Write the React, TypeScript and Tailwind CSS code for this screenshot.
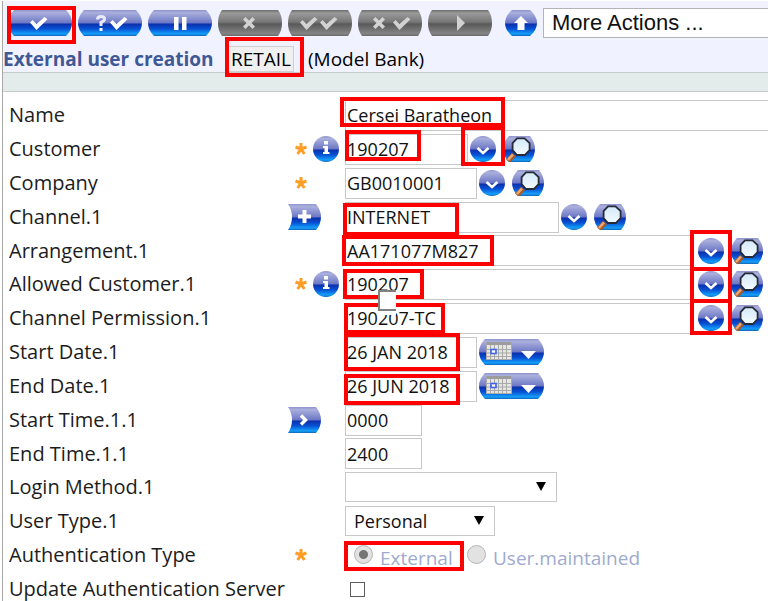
import React from "react";

type Area = { children: React.ReactNode };

/* Shared gradients for the glossy controls */
function Gradients() {
  return (
    <svg width="0" height="0" className="absolute" aria-hidden="true">
      <defs>
        <linearGradient id="blue" x1="0" y1="0" x2="0" y2="1">
          <stop offset="0" stopColor="#8f94cc" />
          <stop offset="0.1" stopColor="#aaafdd" />
          <stop offset="0.48" stopColor="#6f7ac6" />
          <stop offset="0.55" stopColor="#0c32ae" />
          <stop offset="0.72" stopColor="#0750d2" />
          <stop offset="0.92" stopColor="#14a0fb" />
          <stop offset="1" stopColor="#1263b8" />
        </linearGradient>
        <linearGradient id="grey" x1="0" y1="0" x2="0" y2="1">
          <stop offset="0" stopColor="#6d6d6d" />
          <stop offset="0.12" stopColor="#9a9a9a" />
          <stop offset="0.46" stopColor="#777777" />
          <stop offset="0.54" stopColor="#595959" />
          <stop offset="0.9" stopColor="#848484" />
          <stop offset="1" stopColor="#6a6a6a" />
        </linearGradient>
        <linearGradient id="glass" x1="0" y1="0" x2="0" y2="1">
          <stop offset="0" stopColor="#d4e9fa" />
          <stop offset="1" stopColor="#f4fbff" />
        </linearGradient>
      </defs>
    </svg>
  );
}

const check = "M0 5.5L2.5 3L6.5 7L14.5 0L17.5 2.2L6.5 13Z";
const cross = "M0 2.5L2.5 0L6 3.5L9.5 0L12 2.5L8.5 6L12 9.5L9.5 12L6 8.5L2.5 12L0 9.5L3.5 6Z";

function ToolButton({ label, grey, children }: Area & { label: string; grey?: boolean }) {
  return (
    <button type="button" aria-label={label} disabled={grey} className="block h-[26px] w-16 shrink-0">
      <svg viewBox="0 0 64 26" className="block h-[26px] w-16">
        {grey ? (
          <path d="M4 0H60Q64 5 64 13T60 26H4Q0 21 0 13T4 0Z" fill="url(#grey)" />
        ) : (
          <path d="M6 0H58Q64 6 64 13T58 26H6Q0 20 0 13T6 0Z" fill="url(#blue)" />
        )}
        <g fill={grey ? "#d2d2d2" : "#ffffff"}>{children}</g>
      </svg>
    </button>
  );
}

function DropButton({ framed }: { framed?: string }) {
  return (
    <span className="relative block h-[26px] w-[26px] shrink-0">
      <button type="button" aria-label="Show list" className="block">
        <svg viewBox="0 0 26 26" className="block h-[26px] w-[26px]">
          <circle cx="13" cy="13" r="13" fill="url(#blue)" />
          <path d="M7.5 12l5.5 5 5.5-5" fill="none" stroke="#fff" strokeWidth="2.6" />
        </svg>
      </button>
      {framed && <Frame place={framed} />}
    </span>
  );
}

function SearchButton() {
  return (
    <button type="button" aria-label="Search" className="ml-[7px] block shrink-0">
      <svg viewBox="0 0 32 26" className="block h-[26px] w-8">
        <path d="M6 0H27Q32 6 32 13T27 26H6Q0 20 0 13T6 0Z" fill="url(#blue)" />
        <path d="M5 25L11 18.5" stroke="#a5592b" strokeWidth="5.4" />
        <path d="M5 24L10 18.5" stroke="#eda873" strokeWidth="2.6" />
        <path
          d="M14 2.4H21.5L26.6 7.2V14L21.8 19H14L9.6 14.2V7.2Z"
          fill="url(#glass)"
          stroke="#262b38"
          strokeWidth="1.8"
        />
      </svg>
    </button>
  );
}

function CalendarButton() {
  return (
    <button type="button" aria-label="Open calendar" className="block shrink-0">
      <svg viewBox="0 0 65 26" className="block h-[26px] w-[65px]">
        <path d="M6 0H59Q65 6 65 13T59 26H6Q0 20 0 13T6 0Z" fill="url(#blue)" />
        <rect x="7" y="3" width="26" height="18" fill="#e6e6e2" />
        <rect x="7" y="3" width="26" height="3" fill="#9c9c9c" />
        <path
          d="M7 10.5H33M7 14H33M7 17.5H33M7 20.5H33M7.5 3V21M11.5 6V21M15.5 6V21M19.5 6V21M23.5 6V21M27.5 6V21M32.5 3V21"
          stroke="#a9a9a9"
          strokeWidth="1"
        />
        <rect x="12" y="10.5" width="5" height="4" fill="#fff" stroke="#3f63e6" strokeWidth="1.6" />
        <path d="M42 12H57L49.5 20Z" fill="#fff" />
      </svg>
    </button>
  );
}

function InfoButton() {
  return (
    <button type="button" aria-label="Information" className="block shrink-0">
      <svg viewBox="0 0 26 26" className="block h-[26px] w-[26px]">
        <circle cx="13" cy="13" r="13" fill="url(#blue)" />
        <rect x="11" y="5" width="4" height="3.5" fill="#fff" />
        <path d="M10 10H15V16H16.5V18H10V16H11.5V12H10Z" fill="#fff" />
      </svg>
    </button>
  );
}

function FlagButton({ label, children }: Area & { label: string }) {
  return (
    <button type="button" aria-label={label} className="block shrink-0">
      <svg viewBox="0 0 33 26" className="block h-[26px] w-[33px]">
        <path d="M0 0H28Q33 6 33 13T28 26H0Q4 20 4 13T0 0Z" fill="url(#blue)" />
        {children}
      </svg>
    </button>
  );
}

function Asterisk() {
  return (
    <span className="flex w-[25px] shrink-0 justify-center">
      <svg viewBox="0 0 14 14" className="h-[14px] w-[14px]" role="img" aria-label="Required">
        <path d="M7 7V1M7 7L1.5 5M7 7L12.5 5M7 7L3.6 12M7 7L10.4 12" stroke="#ff9d24" strokeWidth="3" />
      </svg>
    </span>
  );
}

/* Red highlight drawn over a control */
function Frame({ place }: { place: string }) {
  return <span aria-hidden="true" className={`pointer-events-none absolute z-10 border-4 border-[#ff0000] ${place}`} />;
}

function Row({ id, label, marks, children, short }: Area & {
  id?: string;
  label: string;
  marks?: React.ReactNode;
  short?: boolean;
}) {
  return (
    <div className={`flex items-center ${short ? "h-[33px]" : "h-[34px]"}`}>
      {id ? (
        <label htmlFor={id} className="w-[279px] shrink-0 whitespace-nowrap text-[20px]">{label}</label>
      ) : (
        <span className="w-[279px] shrink-0 whitespace-nowrap text-[20px]">{label}</span>
      )}
      <div className="flex w-[57px] shrink-0 items-center">{marks}</div>
      {children}
    </div>
  );
}

function Field({ id, value, size, framed, children }: {
  id: string;
  value: string;
  size: string;
  framed?: string;
  children?: React.ReactNode;
}) {
  return (
    <div className={`relative ${size}`}>
      <input
        id={id}
        defaultValue={value}
        className="block h-[31px] w-full border border-[#c8c8c8] bg-white px-px text-[18px] text-[#111111] outline-none"
      />
      {framed && <Frame place={framed} />}
      {children}
    </div>
  );
}

function Picker({ id, options, size }: { id: string; options: string[]; size: string }) {
  return (
    <div className={`relative ${size}`}>
      <select
        id={id}
        className="block h-[30px] w-full appearance-none border border-[#c8c8c8] bg-white pl-2 text-[18px] text-[#111111] outline-none"
      >
        {options.map((o) => (
          <option key={o}>{o}</option>
        ))}
      </select>
      <svg viewBox="0 0 10 9" className="pointer-events-none absolute right-[11px] top-[10px] h-[9px] w-[10px]">
        <path d="M0 0H10L5 9Z" fill="#000" />
      </svg>
    </div>
  );
}

const radio =
  "h-[19px] w-[19px] shrink-0 -translate-y-1 appearance-none rounded-full border border-[#b5b5b5] bg-[#e2e2e2] checked:bg-[radial-gradient(circle,#757575_0_4px,#e2e2e2_5px)]";

export default function App() {
  return (
    <main className="overflow-hidden bg-white pl-[2px] pt-px font-['Open_Sans','Noto_Sans',sans-serif] text-[19px] leading-6 text-[#1c1c1c]">
      <Gradients />
      <div className="border-l border-[#a8a8a8]">
        <header className="h-[72px] border-b border-[#c6cac9] bg-[#f0f2ff]">
          <div className="flex items-start pl-[5px] pt-[7px]">
            <div className="flex gap-[6px] pt-[2px]">
              <span className="relative block">
                <ToolButton label="Commit">
                  <path d={check} transform="translate(22 7)" />
                </ToolButton>
                <Frame place="-left-px -right-[4px] -top-[4px] -bottom-[8px]" />
              </span>
              <ToolButton label="Validate">
                <path d="M19.5 9.5Q19.5 6.5 23 6.5T26.5 9Q26.5 11 23 12.5V16" fill="none" stroke="#e8eaf8" strokeWidth="3" />
                <rect x="21.5" y="18" width="3" height="3" />
                <path d={check} transform="translate(32 7)" />
              </ToolButton>
              <ToolButton label="Hold">
                <rect x="26" y="7" width="4.5" height="13" />
                <rect x="34" y="7" width="4.5" height="13" />
              </ToolButton>
              <ToolButton label="Delete" grey>
                <path d={cross} transform="translate(25 7)" />
              </ToolButton>
              <ToolButton label="Authorise" grey>
                <path d={check} transform="translate(12 7)" />
                <path d={check} transform="translate(32 7)" />
              </ToolButton>
              <ToolButton label="Reverse" grey>
                <path d={cross} transform="translate(15 7)" />
                <path d={check} transform="translate(35 7)" />
              </ToolButton>
              <ToolButton label="Next" grey>
                <path d="M29 5L37 13L29 21Z" />
              </ToolButton>
            </div>
            <button type="button" aria-label="Up" className="ml-[13px] mt-[2px] block shrink-0">
              <svg viewBox="0 0 32 26" className="block h-[26px] w-8">
                <path d="M7 0H25Q32 6 32 13T25 26H7Q0 20 0 13T7 0Z" fill="url(#blue)" />
                <path d="M16 6L23 13H19.5V20H12.5V13H9Z" fill="#fff" />
              </svg>
            </button>
            <select
              aria-label="More Actions"
              className="ml-[6px] h-[30px] min-w-0 flex-1 appearance-none border border-r-0 border-[#b4b4b4] bg-white pl-2 font-['Liberation_Sans',Arial,sans-serif] text-[22px] text-[#111111] outline-none"
            >
              <option>More Actions ...</option>
            </select>
          </div>
          <div className="flex items-center whitespace-nowrap pt-[8px]">
            <h1 className="w-[225px] shrink-0 font-bold text-[#3f5896]">External user creation</h1>
            <span className="relative border border-[#cfcfcf] bg-[#f0f0f0] px-[2px] text-black">
              RETAIL
              <Frame place="-left-[4px] -right-[11px] -top-[10px] -bottom-[6px]" />
            </span>
            <span className="ml-[14px] text-black">(Model Bank)</span>
          </div>
        </header>
        <div className="h-[19px] border-b border-[#c6cac9] bg-[#e4eceb]" />

        <form className="pl-[6px] pt-[6px]">
          <Row id="name" label="Name">
            <div className="relative flex-1">
              <input
                id="name"
                defaultValue="Cersei Baratheon"
                className="block h-[31px] w-full border border-r-0 border-[#c8c8c8] bg-white px-px text-[18px] text-[#111111] outline-none"
              />
              <Frame place="-left-[5px] -top-[3px] h-[30px] w-[165px]" />
            </div>
          </Row>
          <Row id="customer" label="Customer" marks={<><Asterisk /><InfoButton /></>}>
            <Field id="customer" value="190207" size="w-[123px] mr-[2px]" framed="left-0 -top-[4px] h-[31px] w-[76px]" />
            <DropButton framed="-left-[9px] -top-[10px] h-[40px] w-[44px]" />
            <SearchButton />
          </Row>
          <Row id="company" label="Company" marks={<Asterisk />}>
            <Field id="company" value="GB0010001" size="w-[132px] mr-[2px]" />
            <DropButton />
            <SearchButton />
          </Row>
          <Row
            id="channel"
            label="Channel.1"
            marks={
              <FlagButton label="Add channel">
                <path d="M16.5 6V19M10 12.5H23" stroke="#fff" strokeWidth="4" />
              </FlagButton>
            }
          >
            <Field id="channel" value="INTERNET" size="w-[214px] mr-[2px]" framed="-left-[2px] top-px h-[33px] w-[116px]" />
            <DropButton />
            <SearchButton />
          </Row>
          <Row id="arrangement" label="Arrangement.1" short>
            <Field id="arrangement" value="AA171077M827" size="mr-[4px] flex-1" framed="-left-[3px] top-0 h-[31px] w-[152px]" />
            <DropButton framed="-left-[8px] -top-[8px] h-[41px] w-[42px]" />
            <SearchButton />
            <span className="w-[5px]" />
          </Row>
          <Row id="allowed" label="Allowed Customer.1" marks={<><Asterisk /><InfoButton /></>}>
            <Field id="allowed" value="190207" size="mr-[4px] flex-1" framed="-left-[2px] top-0 h-[30px] w-[81px]">
              <span aria-hidden="true" className="absolute left-[33px] top-[21px] z-20 h-[25px] w-[18px] bg-white">
                <span className="block h-[21px] border-2 border-r-0 border-[#808080]" />
              </span>
            </Field>
            <DropButton framed="-left-[8px] -top-[4px] h-[36px] w-[42px]" />
            <SearchButton />
            <span className="w-[5px]" />
          </Row>
          <Row id="permission" label="Channel Permission.1">
            <Field id="permission" value="190207-TC" size="mr-[4px] flex-1" framed="-left-px top-0 h-[31px] w-[101px]" />
            <DropButton framed="-left-[8px] -top-[6px] h-[36px] w-[42px]" />
            <SearchButton />
            <span className="w-[5px]" />
          </Row>
          <Row id="start-date" label="Start Date.1">
            <Field id="start-date" value="26 JAN 2018" size="w-[132px] mr-[2px]" framed="-left-px -top-[4px] h-[38px] w-[116px]" />
            <CalendarButton />
          </Row>
          <Row id="end-date" label="End Date.1">
            <Field id="end-date" value="26 JUN 2018" size="w-[132px] mr-[2px]" framed="-left-px top-[3px] h-[31px] w-[116px]" />
            <CalendarButton />
          </Row>
          <Row
            id="start-time"
            label="Start Time.1.1"
            marks={
              <FlagButton label="Expand start time">
                <path d="M13 8.5L17.5 13L13 17.5" fill="none" stroke="#fff" strokeWidth="3.4" />
              </FlagButton>
            }
          >
            <Field id="start-time" value="0000" size="w-[77px]" />
          </Row>
          <Row id="end-time" label="End Time.1.1" short>
            <Field id="end-time" value="2400" size="w-[77px]" />
          </Row>
          <Row id="login" label="Login Method.1">
            <Picker id="login" options={[""]} size="w-[212px]" />
          </Row>
          <Row id="user-type" label="User Type.1">
            <Picker id="user-type" options={["Personal"]} size="w-[150px]" />
          </Row>
          <Row label="Authentication Type" marks={<Asterisk />}>
            <div className="relative flex items-center pl-[9px] pt-[6px] text-[#9eabce]">
              <input id="external" type="radio" name="auth" defaultChecked disabled className={radio} />
              <label htmlFor="external" className="ml-[7px] w-[87px]">External</label>
              <input id="maintained" type="radio" name="auth" disabled className={radio} />
              <label htmlFor="maintained" className="ml-[7px] whitespace-nowrap">User.maintained</label>
              <Frame place="-left-px top-px h-[30px] w-[120px]" />
            </div>
          </Row>
          <Row id="update" label="Update Authentication Server">
            <input
              id="update"
              type="checkbox"
              className="ml-[5px] h-[15px] w-[15px] appearance-none border border-[#5c5c5c] bg-white checked:bg-[#5c5c5c]"
            />
          </Row>
        </form>
      </div>
    </main>
  );
}
